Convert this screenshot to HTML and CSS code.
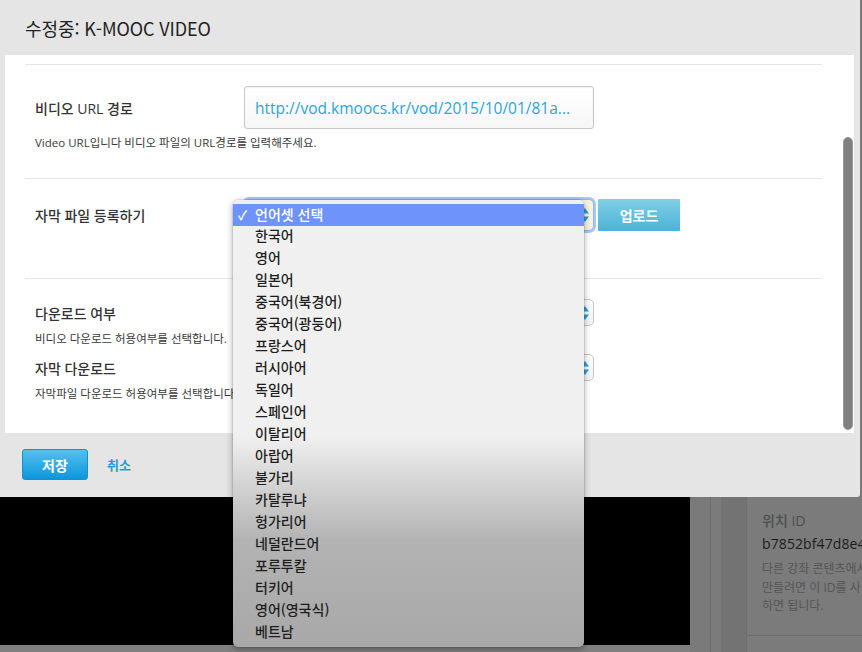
FILE: index.html
```html
<!DOCTYPE html>
<html lang="ko">
<head>
<meta charset="utf-8">
<title>수정중: K-MOOC VIDEO</title>
<link rel="stylesheet" href="styles.css">
</head>
<body>
<div class="page">
  <div class="video-col"><div class="video"></div></div>
  <div class="gutter"></div>
  <div class="strip-a"></div>
  <div class="strip-b"></div>
  <div class="side">
    <div class="side-sec">
      <div class="side-label">위치 ID</div>
      <div class="side-id">b7852bf47d8e4fa8a</div>
      <div class="side-desc">다른 강좌 콘텐츠에서 링크를<br>만들려면 이 ID를 사용하시고<br>하면 됩니다.</div>
    </div>
    <div class="side-sec2"></div>
  </div>
</div>

<div class="modal">
  <div class="modal-head"><h2 class="modal-title">수정중: K-MOOC VIDEO</h2></div>
  <div class="modal-body">
    <div class="content">
      <div class="section s1">
        <div class="field">
          <label class="label">비디오 URL 경로</label>
          <div class="input">http://vod.kmoocs.kr/vod/2015/10/01/81a...</div>
        </div>
        <p class="help">Video URL입니다 비디오 파일의 URL경로를 입력해주세요.</p>
      </div>
      <div class="section s2">
        <div class="field">
          <label class="label">자막 파일 등록하기</label>
          <div class="upload-row">
            <div class="select select-focus">언어셋 선택<span class="arrows"><svg width="8" height="14" viewBox="0 0 8 14"><path d="M4 0 L8 5.5 L0 5.5 Z M4 14 L8 8.5 L0 8.5 Z" fill="#2b9fd9"/></svg></span></div>
            <button class="btn-upload">업로드</button>
          </div>
        </div>
      </div>
      <div class="section s3">
        <div class="field">
          <label class="label">다운로드 여부</label>
          <div class="select select-sm">예<span class="arrows"><svg width="8" height="14" viewBox="0 0 8 14"><path d="M4 0 L8 5.5 L0 5.5 Z M4 14 L8 8.5 L0 8.5 Z" fill="#2b9fd9"/></svg></span></div>
        </div>
        <p class="help">비디오 다운로드 허용여부를 선택합니다.</p>
        <div class="field f2">
          <label class="label">자막 다운로드</label>
          <div class="select select-sm">예<span class="arrows"><svg width="8" height="14" viewBox="0 0 8 14"><path d="M4 0 L8 5.5 L0 5.5 Z M4 14 L8 8.5 L0 8.5 Z" fill="#2b9fd9"/></svg></span></div>
        </div>
        <p class="help">자막파일 다운로드 허용여부를 선택합니다.</p>
      </div>
    </div>
    <div class="scrollbar"></div>
  </div>
  <div class="modal-foot">
    <button class="btn-save">저장</button>
    <a class="cancel" href="#">취소</a>
  </div>
</div>

<ul class="menu">
  <li class="item selected"><span class="chk">✓</span>언어셋 선택</li>
  <li class="item"><span class="chk"></span>한국어</li>
  <li class="item"><span class="chk"></span>영어</li>
  <li class="item"><span class="chk"></span>일본어</li>
  <li class="item"><span class="chk"></span>중국어(북경어)</li>
  <li class="item"><span class="chk"></span>중국어(광둥어)</li>
  <li class="item"><span class="chk"></span>프랑스어</li>
  <li class="item"><span class="chk"></span>러시아어</li>
  <li class="item"><span class="chk"></span>독일어</li>
  <li class="item"><span class="chk"></span>스페인어</li>
  <li class="item"><span class="chk"></span>이탈리어</li>
  <li class="item"><span class="chk"></span>아랍어</li>
  <li class="item"><span class="chk"></span>불가리</li>
  <li class="item"><span class="chk"></span>카탈루냐</li>
  <li class="item"><span class="chk"></span>헝가리어</li>
  <li class="item"><span class="chk"></span>네덜란드어</li>
  <li class="item"><span class="chk"></span>포루투칼</li>
  <li class="item"><span class="chk"></span>터키어</li>
  <li class="item"><span class="chk"></span>영어(영국식)</li>
  <li class="item"><span class="chk"></span>베트남</li>
</ul>
</body>
</html>
```

FILE: styles.css
```css
* { box-sizing: border-box; }
html, body { margin: 0; padding: 0; }
body {
  width: 862px;
  height: 652px;
  overflow: hidden;
  background: #7a7a7a;
  font-family: "Open Sans", "Noto Sans CJK KR", sans-serif;
  position: relative;
}

/* background page (dimmed) */
.page {
  display: flex;
  height: 652px;
}
.video-col {
  width: 690px;
  background: #808080;
}
.video {
  height: 645px;
  background: #000;
}
.gutter {
  width: 21px;
  background: #7a7a7a;
  border-right: 1px solid #6e6e6e;
}
.strip-a {
  width: 10px;
  background: #7b7b7b;
}
.strip-b {
  width: 26px;
  background: #737373;
  border-right: 1px solid #6e6e6e;
}
.side {
  flex: 1;
  background: #7b7b7b;
  overflow: hidden;
  white-space: nowrap;
}
.side-sec {
  padding: 511px 0 0 15px;
  height: 636px;
  border-bottom: 1px solid #6c6c6c;
}
.side-label {
  font-size: 14px;
  font-weight: 500;
  color: #4e4e4e;
  line-height: 20px;
}
.side-id {
  font-size: 14px;
  color: #1c1c1c;
  line-height: 24px;
  margin-top: 1px;
  letter-spacing: 0.1px;
}
.side-desc {
  font-size: 12px;
  color: #555;
  line-height: 18.5px;
  margin-top: 4px;
}

/* modal */
.modal {
  position: absolute;
  left: 0;
  top: 0;
  width: 860px;
  height: 497px;
  background: #e5e5e5;
  display: flex;
  flex-direction: column;
  border-radius: 0 0 3px 0;
  z-index: 5;
}
.modal-head {
  height: 55px;
  padding-left: 25px;
  display: flex;
  align-items: center;
}
.modal-title {
  margin: 0;
  font-family: "Noto Sans CJK KR", sans-serif;
  font-weight: 400;
  font-size: 18px;
  color: #222;
  letter-spacing: -0.1px;
  padding-top: 1px;
}
.modal-body {
  height: 378px;
  margin: 0 6px 0 5px;
  background: #fff;
  position: relative;
  overflow: hidden;
}
.content {
  padding: 9px 32px 0 20px;
}
.section {
  border-top: 1px solid #e6e6e6;
  padding-left: 10px;
}
.s1 { padding-top: 21px; padding-bottom: 27px; }
.s2 { padding-top: 20px; padding-bottom: 47px; }
.s3 { padding-top: 20px; }
.field {
  display: grid;
  grid-template-columns: 209px auto;
  align-items: center;
}
.f2 { margin-top: 7px; }
.label {
  font-size: 14px;
  font-weight: 500;
  color: #333;
}
.input {
  width: 350px;
  height: 43px;
  border: 1px solid #c8c8c8;
  border-radius: 3px;
  background: linear-gradient(#ffffff, #f6f6f6);
  box-shadow: inset 0 1px 2px rgba(0,0,0,0.06);
  padding-left: 10px;
  display: flex;
  align-items: center;
  font-size: 15.5px;
  color: #2ca5dd;
  white-space: nowrap;
  overflow: hidden;
}
.help {
  margin: 5px 0 0;
  font-size: 11.5px;
  line-height: 16px;
  color: #3a3a3a;
}
.s1 .help { margin-top: 6px; }
.upload-row {
  display: flex;
  gap: 4px;
}
.select {
  position: relative;
  width: 350px;
  border: 1px solid #c7c7c7;
  border-radius: 5px;
  background: linear-gradient(#ffffff, #f4f4f4);
  font-size: 13px;
  color: #333;
  padding-left: 10px;
  display: flex;
  align-items: center;
}
.select-focus {
  height: 32px;
  background: #f7f3df;
  border-color: #8fb8e8;
  box-shadow: 0 0 0 2px #a7c9f2;
}
.select-sm { height: 27px; }
.arrows {
  position: absolute;
  right: 4px;
  top: 50%;
  transform: translateY(-50%);
  display: flex;
}
.btn-upload {
  width: 82px;
  height: 32px;
  border: 0;
  border-radius: 1px;
  background: linear-gradient(#80cfe4, #4bb3d8);
  color: #fff;
  font-family: "Noto Sans CJK KR", sans-serif;
  font-size: 14px;
  font-weight: 700;
  padding: 0;
}
.scrollbar {
  position: absolute;
  right: 1px;
  top: 82px;
  width: 10px;
  height: 293px;
  border-radius: 5px;
  background: #808080;
  border: 1px solid #9a9a9a;
}
.modal-foot {
  flex: 1;
  display: flex;
  align-items: flex-start;
  padding: 16px 0 0 22px;
  gap: 19px;
}
.btn-save {
  width: 66px;
  height: 31px;
  border: 1px solid #1590d0;
  border-radius: 3px;
  background: linear-gradient(#55c0f0, #0b97dc);
  color: #fff;
  font-family: "Noto Sans CJK KR", sans-serif;
  font-size: 14px;
  font-weight: 700;
  padding: 0;
}
.cancel {
  font-family: "Noto Sans CJK KR", sans-serif;
  font-size: 13px;
  font-weight: 700;
  color: #1e9ed9;
  text-decoration: none;
  line-height: 31px;
}

/* native popup menu */
.menu {
  position: absolute;
  left: 233px;
  top: 200px;
  width: 351px;
  height: 447px;
  margin: 0;
  padding: 4px 0 0;
  list-style: none;
  border-radius: 5px;
  background: linear-gradient(#f0f0f0 0px, #f0f0f0 236px, #b3b3b3 340px, #a8a8a8 447px);
  box-shadow: 0 2px 7px rgba(0,0,0,0.35), 0 0 0 0.5px rgba(0,0,0,0.15);
  font-family: "Noto Sans CJK KR", sans-serif;
  font-size: 14px;
  font-weight: 500;
  color: #1e1e1e;
  z-index: 10;
}
.item {
  height: 22px;
  line-height: 18px;
  display: flex;
  align-items: flex-start;
  white-space: nowrap;
}
.selected {
  line-height: 21px;
  background: #6e93fb;
  color: #fff;
}
.chk {
  width: 22px;
  padding-left: 5px;
  font-size: 13px;
}
```
